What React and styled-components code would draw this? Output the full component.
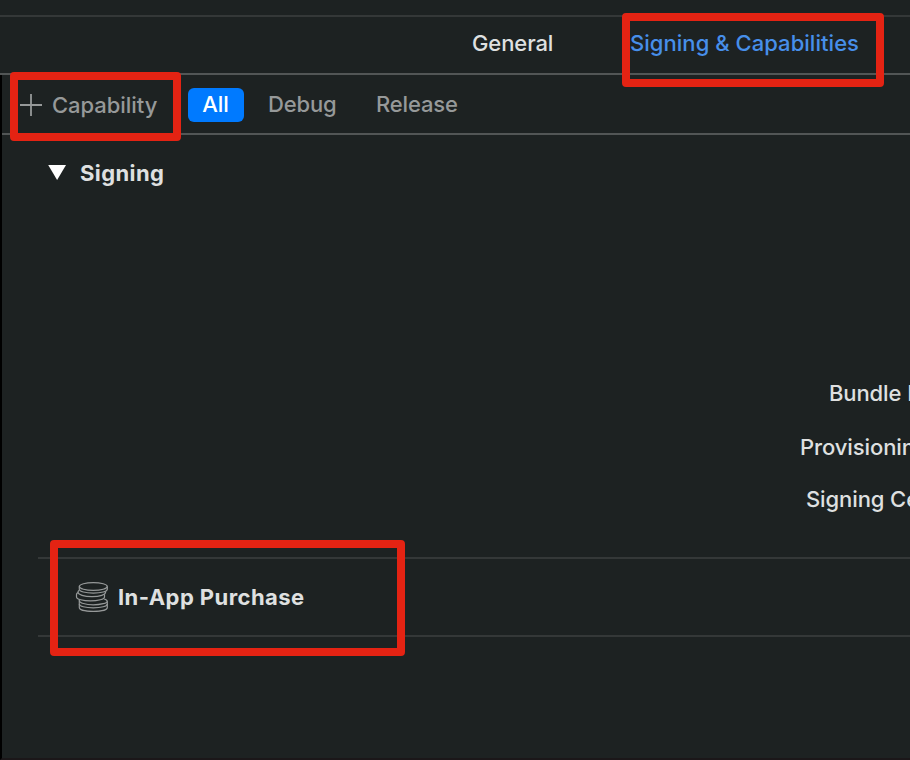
import React from "react";
import styled, { createGlobalStyle } from "styled-components";

const GlobalStyle = createGlobalStyle`
  * { box-sizing: border-box; }
  body {
    margin: 0;
    background: #1d2222;
    font-family: Inter, "Liberation Sans", sans-serif;
  }
`;

const Window = styled.main`
  position: relative;
  display: flex;
  flex-direction: column;
  width: 910px;
  height: 760px;
  overflow: hidden;
  background: #1d2222;
  color: #dfe0e0;
  font-size: 22px;
  font-weight: 450;
  line-height: 28px;
  white-space: nowrap;
`;

const TopStrip = styled.div`
  flex: none;
  height: 17px;
  border-bottom: 2px solid #343838;
`;

const TabBar = styled.nav`
  display: flex;
  flex: none;
  height: 58px;
  padding: 12px 0 0 472px;
  border-bottom: 2px solid #525656;
`;

const Tab = styled.span`
  min-width: 158px;
  color: ${(p) => (p.$active ? "#478fea" : "#dfe0e0")};
  letter-spacing: ${(p) => p.$tracking || "-0.1px"};
`;

const Body = styled.div`
  flex: 1;
  border-left: 2px solid #000;
  border-bottom: 2px solid #1b1719;
`;

const FilterBar = styled.div`
  display: flex;
  align-items: flex-start;
  height: 60px;
  padding: 13px 0 0 18px;
  border-bottom: 2px solid #525656;
  color: #969999;
`;

const AddCapability = styled.span`
  display: flex;
  width: 168px;
  gap: 10px;
  padding-top: 3px;
  letter-spacing: -0.05px;

  svg { margin-top: 3px; }
`;

const AllFilter = styled.span`
  width: 56px;
  height: 34px;
  margin-right: 24px;
  padding-right: 1px;
  border-radius: 6px;
  background: #007aff;
  color: #fff;
  font-weight: 500;
  line-height: 33px;
  text-align: center;
`;

const Filter = styled.span`
  width: 108px;
  padding-top: 2px;
  letter-spacing: -0.15px;
`;

const SigningHeader = styled.header`
  display: flex;
  align-items: center;
  gap: 12px;
  height: 28px;
  margin: 24px 0 0 46px;
  font-weight: 700;
  letter-spacing: 0.4px;
`;

const SettingLabels = styled.div`
  display: flex;
  flex-direction: column;
  margin-top: 192px;
`;

const SettingLabel = styled.span`
  height: ${(p) => p.$height}px;
  padding-left: ${(p) => p.$indent}px;
  letter-spacing: -0.1px;
`;

const CapabilityRow = styled.section`
  display: flex;
  align-items: center;
  gap: 9px;
  height: 80px;
  margin: 44px 0 0 36px;
  padding-left: 37px;
  border-top: 2px solid #343838;
  border-bottom: 2px solid #343838;
  font-weight: 700;
  letter-spacing: 0.44px;
`;

const Highlight = styled.div`
  position: absolute;
  left: ${(p) => p.$x}px;
  top: ${(p) => p.$y}px;
  width: ${(p) => p.$w}px;
  height: ${(p) => p.$h}px;
  border: 8px solid #e42313;
  border-radius: 4px;
`;

const PlusIcon = () => (
  <svg width="22" height="22" viewBox="0 0 22 22" stroke="#969999" strokeWidth="1.8">
    <path d="M0 11H22M11 0V22" />
  </svg>
);

const DisclosureTriangle = () => (
  <svg width="20" height="16" viewBox="0 0 20 16" fill="#fff">
    <path d="M0.2 0H18L9.1 15Z" />
  </svg>
);

const CoinsIcon = () => (
  <svg width="34" height="32" viewBox="0 0 34 32" fill="none" stroke="#969999" strokeWidth="1.2">
    <ellipse cx="18.3" cy="5.5" rx="14" ry="3.9" />
    <path d="M4.3 5.5V8.2C4.3 10.4 10.5 12.1 18.3 12.1S32.3 10.4 32.3 8.2V5.5" />
    <path d="M4.3 9.4C3.4 9.8 3 10.4 3 11C3 13.6 9 15.7 17 15.7S30.6 13.6 30.6 11V10.6" />
    <path d="M3 11.6C2 12.1 1.5 12.8 1.5 13.4V15.9C1.5 18.1 8 19.9 15.5 19.9S29.5 18.1 29.5 15.9V13.2" />
    <path d="M4.3 18.7V19.4C4.3 21.8 10.5 23.8 18.3 23.8S32.3 21.8 32.3 20.4C32.3 19.3 31.3 18.7 29.2 18" />
    <path d="M4.3 19.4V26.4C4.3 28.7 10.5 30.3 18.3 30.3S32.3 28.7 32.3 26.4V20.2" />
    <path d="M4.3 23C4.3 25.2 10.5 26.9 18.3 26.9S32.3 25.2 32.3 23" />
  </svg>
);

export default function App() {
  return (
    <>
      <GlobalStyle />
      <Window>
        <TopStrip />
        <TabBar>
          <Tab>General</Tab>
          <Tab $active $tracking="0.04px">Signing &amp; Capabilities</Tab>
        </TabBar>
        <Body>
          <FilterBar>
            <AddCapability>
              <PlusIcon />
              Capability
            </AddCapability>
            <AllFilter>All</AllFilter>
            <Filter>Debug</Filter>
            <Filter>Release</Filter>
          </FilterBar>
          <SigningHeader>
            <DisclosureTriangle />
            Signing
          </SigningHeader>
          <SettingLabels>
            <SettingLabel $height={54} $indent={827}>Bundle Identifier</SettingLabel>
            <SettingLabel $height={52} $indent={798}>Provisioning Profile</SettingLabel>
            <SettingLabel $height={28} $indent={804}>Signing Certificate</SettingLabel>
          </SettingLabels>
          <CapabilityRow>
            <CoinsIcon />
            In-App Purchase
          </CapabilityRow>
        </Body>
        <Highlight $x={622} $y={13} $w={262} $h={74} />
        <Highlight $x={10} $y={72} $w={171} $h={69} />
        <Highlight $x={50} $y={540} $w={355} $h={116} />
      </Window>
    </>
  );
}
